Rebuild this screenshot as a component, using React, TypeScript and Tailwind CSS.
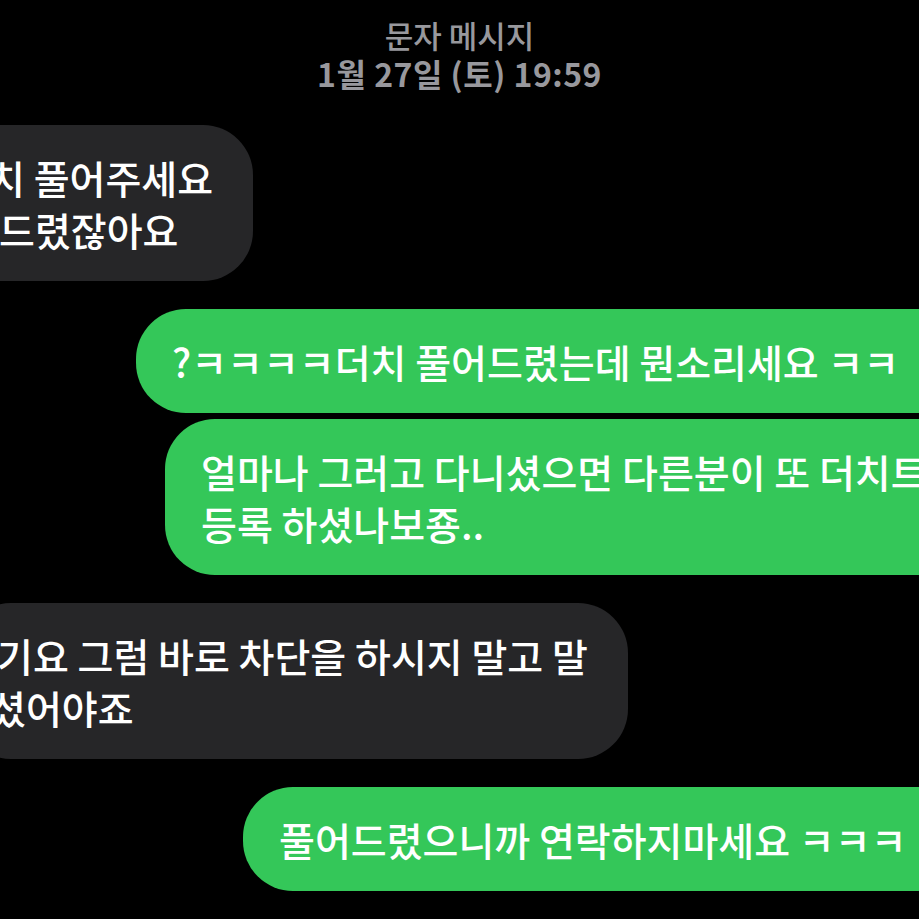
import React from 'react';

const font = "font-['Noto_Sans_CJK_KR','Noto_Sans',sans-serif]";

type Line = { text: string; indent?: string };

const Received = ({ lines, className }: { lines: Line[]; className: string }) => (
  <div className={`w-max rounded-[50px] bg-[#262628] py-[26px] pl-[36px] pr-[40px] text-[39px] leading-[52px] font-medium text-white whitespace-nowrap ${className}`}>
    {lines.map((l) => (
      <div key={l.text} className={l.indent}>
        {l.text}
      </div>
    ))}
  </div>
);

const Sent = ({ lines, className }: { lines: string[]; className: string }) => (
  <div className={`w-max shrink-0 rounded-[50px] bg-[#34c759] py-[26px] pl-[36px] pr-[160px] text-[39px] leading-[52px] font-medium text-white whitespace-nowrap ${className}`}>
    {lines.map((l) => (
      <div key={l}>{l}</div>
    ))}
  </div>
);

export default function App() {
  return (
    <div className={`w-[919px] h-[919px] overflow-hidden bg-black ${font}`}>
      {/* header */}
      <div className="flex flex-col items-center pt-[15px] leading-[39px] text-[#98989d]">
        <div className="text-[31px] font-medium">문자 메시지</div>
        <div className="text-[32px] font-semibold tracking-[0.5px]">1월 27일 (토) 19:59</div>
      </div>

      <div className="mt-[32px] flex flex-col">
        <Received
          className="-ml-[47px]"
          lines={[{ text: '치 풀어주세요' }, { text: '드렸잖아요', indent: 'ml-[10px]' }]}
        />

        <Sent className="mt-[28px] ml-[136px]" lines={['?ㅋㅋㅋㅋ더치 풀어드렸는데 뭔소리세요 ㅋㅋ']} />

        <Sent
          className="mt-[6px] ml-[165px]"
          lines={['얼마나 그러고 다니셨으면 다른분이 또 더치트', '등록 하셨나보죵..']}
        />

        <Received
          className="mt-[28px] -ml-[39px]"
          lines={[{ text: '기요 그럼 바로 차단을 하시지 말고 말' }, { text: '셨어야죠', indent: '-ml-[7px]' }]}
        />

        <Sent className="mt-[28px] ml-[243px]" lines={['풀어드렸으니까 연락하지마세요 ㅋㅋㅋ']} />
      </div>
    </div>
  );
}
